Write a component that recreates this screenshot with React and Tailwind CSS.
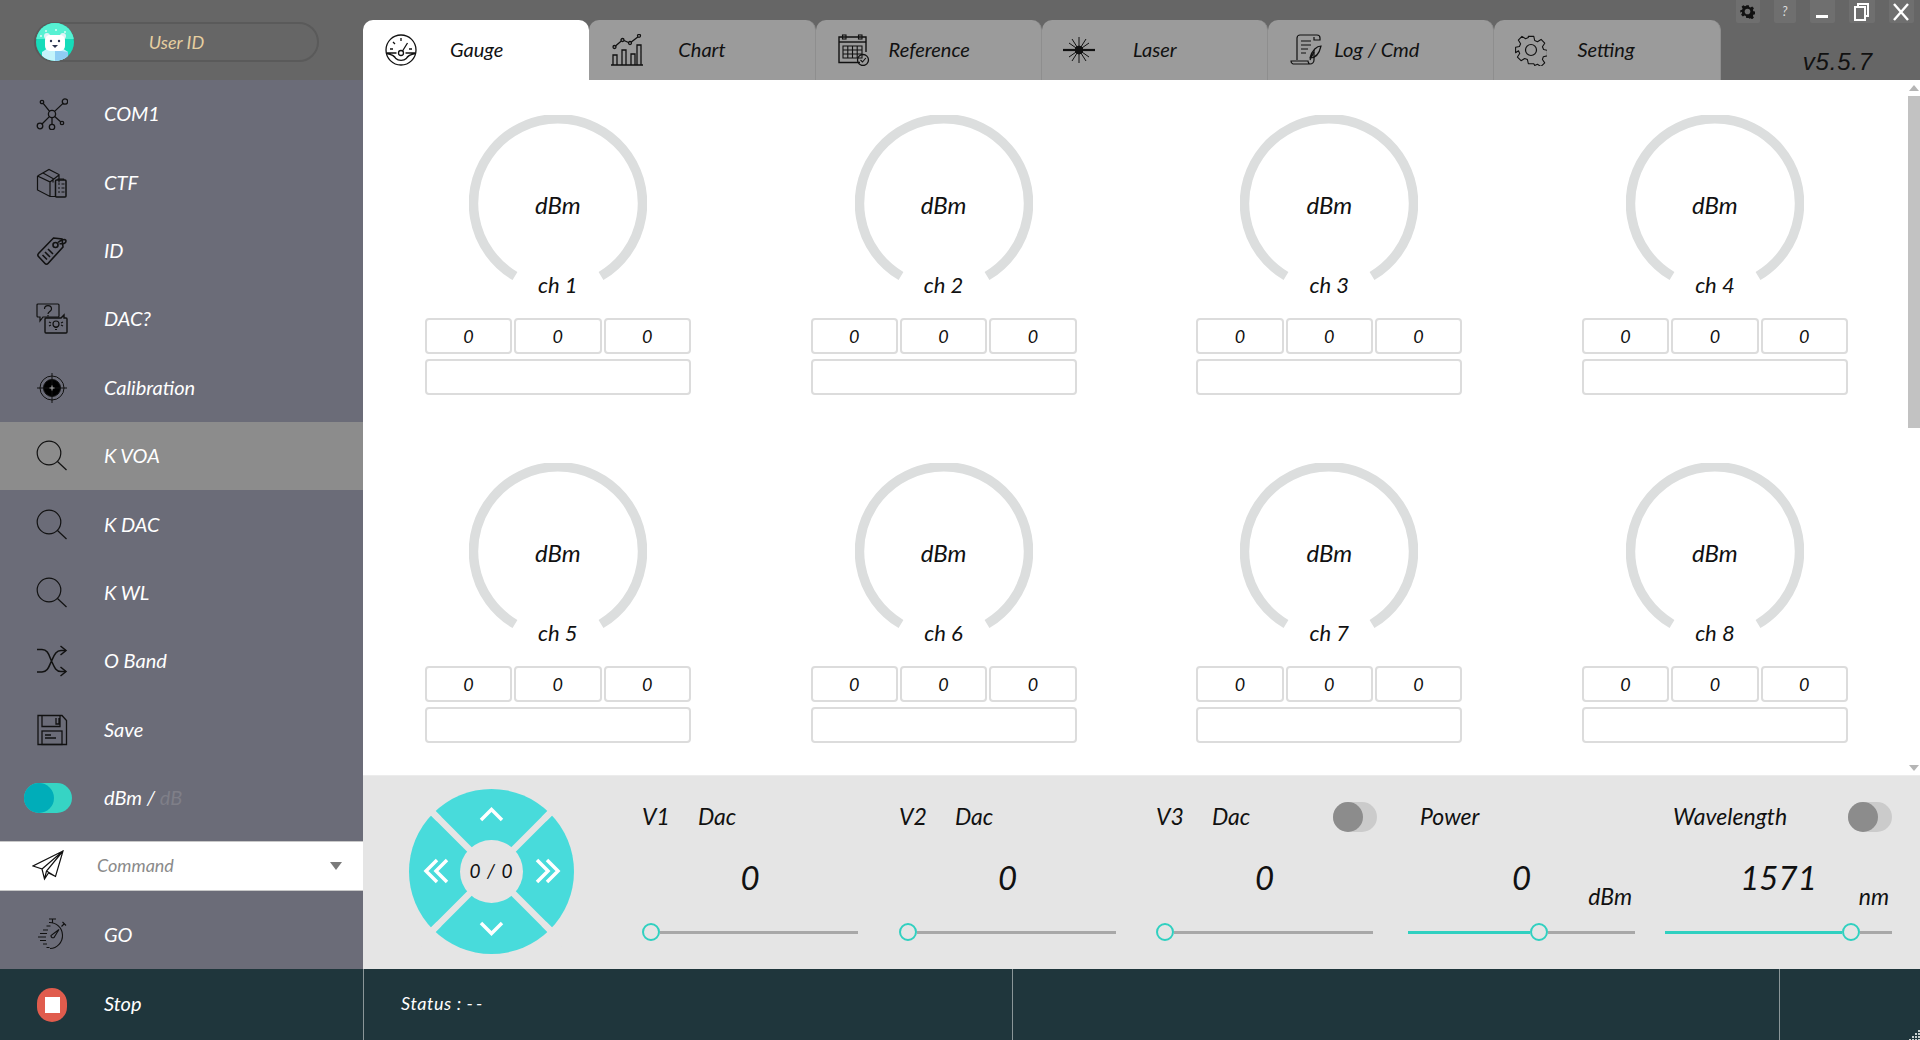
import React from "react";

const font = "font-['Lato',sans-serif] italic";

// ---------- sidebar / tab icons ----------
const Svg = ({ children, size = 32, className = "", sw = 1.2 }) => (
  <svg width={size} height={size} viewBox="0 0 32 32" fill="none" stroke="#111" strokeWidth={sw} className={className}>
    {children}
  </svg>
);

const NodesIcon = () => (
  <Svg sw={1.3}>
    <circle cx="16" cy="16" r="3.6" />
    <circle cx="29" cy="3.5" r="2.7" />
    <circle cx="6" cy="4" r="1.7" />
    <circle cx="4" cy="28" r="2.8" />
    <circle cx="16" cy="29" r="2.7" />
    <circle cx="26" cy="25" r="1.7" />
    <path d="M18.6 13.4 27 5.4M13.6 13.4 7.2 5.3M13.4 18.6 6 26M16 19.6v6.7M18.7 18.6l5.9 5.2" />
  </Svg>
);
const BoxIcon = () => (
  <Svg>
    <path d="M1.500 9 13 2.500 23 7.500v8M1.500 9v14L14 29.500h6M1.500 9 14 15v14.500M14 15 23 8M7 6l10 5.500v4" />
    <rect x="19.500" y="13" width="10.500" height="17" rx="1" strokeWidth="1.5" />
    <path d="M22 13v-1h5.500v1M22 17h2M25.500 17h3M22 21h2M25.500 21h3M22 25h2M25.500 25h3" />
  </Svg>
);
const TagIcon = () => (
  <Svg sw={1.6}>
    <path d="M17.500 3 26 4 27 12 12 28.500a2 2 0 0 1-3 0L2.500 21.500a2 2 0 0 1 0-3z" />
    <circle cx="19.500" cy="10" r="2.500" />
    <path d="M22 7.500c3-3 8-4 8-1.500s-3 3-6.500 2.700M9 17l5 5M6.500 20l4.500 4.500M12 14l5 5" />
  </Svg>
);
const ChatIcon = () => (
  <Svg>
    <path d="M2 1h20a1 1 0 0 1 1 1v11a1 1 0 0 1-1 1H7l-3 4v-4H2a1 1 0 0 1-1-1V2a1 1 0 0 1 1-1z" />
    <path d="M8.500 6c0-4.500 7-4.500 7 0 0 2.500-3.500 2.500-3.500 5M12 12v1.500" />
    <path d="M10 15h15l3-3v3h2a1 1 0 0 1 1 1v13a1 1 0 0 1-1 1H10a1 1 0 0 1-1-1V16a1 1 0 0 1 1-1z" strokeWidth="1.4" />
    <circle cx="20" cy="21" r="3" />
    <path d="M18.500 24.500h3M19 26.500h2M13 19l2 1M13 23l2-1M27 19l-2 1M27 23l-2-1" />
  </Svg>
);
const TargetIcon = () => (
  <Svg sw={1}>
    <circle cx="16" cy="16" r="12" />
    <circle cx="16" cy="16" r="8.500" fill="#000" />
    <path d="M16 1v30M1 16h30" />
    <path d="M16 13.500v5M13.500 16h5" stroke="#aaa" />
  </Svg>
);
const SearchIcon = () => (
  <Svg sw={1.2}>
    <circle cx="13" cy="13" r="11.800" />
    <path d="M21.500 21.500 30.500 30" />
  </Svg>
);
const ShuffleIcon = () => (
  <Svg sw={1.5}>
    <path d="M1 4.500h5c6 0 7 6 9.500 11.500s4 10.500 9.500 10.500h5M1 27h5c6 0 7-6 9.500-11s4-10.500 9.500-10.500h5" />
    <path d="m24.500 1 5.500 4.500-5.500 4.500M24.500 22l5.500 4.500-5.500 4.500" />
  </Svg>
);
const SaveIcon = () => (
  <Svg sw={1.3}>
    <path d="M2 1.500h24l4.500 5v24H2z" />
    <path d="M6 1.500v11h18v-11M20 4v6h3V4" />
    <rect x="6" y="17" width="20" height="13.500" />
    <path d="M9 21h6M9 24h11" />
  </Svg>
);
const PlaneIcon = () => (
  <Svg sw={1.2}>
    <path d="M31 1 1 16l9 3 2.500 10 4-6 7 3.500zM31 1 10 19M31 1 14.500 21l-2 8M14.500 21l9 5.500" />
  </Svg>
);
const TimerIcon = () => (
  <Svg sw={1.1}>
    <path d="M12 4.500A13 13 0 1 1 13 30.500M27 6l-2.500 2.500M25.500 4l3.500 3.500M12 1h7M15.500 1v3.500" />
    <path d="m22 11.500-5 8a2 2 0 0 1-3-2z" />
    <path d="M9.500 8h4M6 12h5M3 15.500h7M1 19h8M3 22.500h6M6 26h4M9.500 29.500h3" strokeWidth="1" />
  </Svg>
);

const GaugeIcon = () => (
  <Svg size={32} sw={1.3}>
    <circle cx="16" cy="16" r="15" />
    <path d="M1.500 19h10M20.500 19h10M1.800 19.500c5 1 8 3 9 5 2.500 2.500 8 2.500 10.500 0 1-2 4-4 9-5" />
    <circle cx="16" cy="19" r="2.500" />
    <path d="m17.500 17 5-8M5 15h3M24 15h3M8 8l2 2M16 4v3" />
  </Svg>
);
const ChartIcon = () => (
  <Svg size={32} sw={1.3}>
    <path d="M0 31h32M2 31V21h4v10M11 31V16h4v15M20 31V20h4v11M26 31V11h4v20" />
    <circle cx="3.500" cy="13" r="1.500" />
    <circle cx="11.500" cy="6" r="1.500" />
    <circle cx="19" cy="9" r="1.500" />
    <circle cx="28" cy="1.800" r="1.500" />
    <path d="m4.500 12 5.800-5M13 6.500l4.500 2M20.300 8l6.500-5" />
  </Svg>
);
const CalendarIcon = () => (
  <Svg size={32} sw={1.1}>
    <path d="M22 28.500H1V3h27v15" strokeWidth="1.4" />
    <path d="M1 8h27" strokeWidth="1.4" />
    <rect x="4.500" y="1" width="3.500" height="4" />
    <rect x="20.500" y="1" width="3.500" height="4" />
    <path d="M5 12h19v12H5zM5 16h19M5 20h19M9.800 12v12M14.500 12v12M19.200 12v12" />
    <circle cx="25" cy="26" r="5.500" strokeWidth="1.3" />
    <path d="m22.500 26 2 2 3.300-4" />
  </Svg>
);
const LaserIcon = () => (
  <svg width="32" height="32" viewBox="0 0 32 32" fill="none" stroke="#111" strokeWidth="1">
    <path d="M0 16h32" strokeWidth="2.200" />
    <path d="M16 3v26M9 5l14 22M23 5 9 27M6 9l20 14M26 9 6 23" />
    <circle cx="16" cy="16" r="4" fill="#111" />
  </svg>
);
const ScrollIcon = () => (
  <Svg size={32} sw={1.2}>
    <path d="M7 26V4a3 3 0 0 1 3-3h17a3 3 0 0 1 3 3v2h-6V3" />
    <path d="M24 16v10a4 4 0 0 1-4 4H3a3 3 0 0 1-2-3h17c0 1 1 3 2 3" />
    <path d="M11 7h10M11 11h10M11 15h7M11 19h5" />
    <path d="M31 12c-4 0-9 4-11 12 4 0 9-3 11-12zM20 26l4-8" />
  </Svg>
);
const cogPath =
  "M13 1h6l1 4.500 3 1.300 4-2.500 4 4.200-2.500 3.800 1.300 3 4.200 1v6l-4.500 1-1 3 2.500 3.800-4.200 4-3.800-2.500-3 1.300L19 31h-6l-1-4.500-3-1.300-4 2.500-4-4 2.500-4-1.300-3L-1 19v-6l4.200-1 1.300-3-2.500-4 4-4 4 2.500 3-1.300z";
const CogIcon = () => (
  <svg width="32" height="32" viewBox="0 0 32 32" fill="none" stroke="#111" strokeWidth="1.2" strokeLinejoin="round">
    <path d={cogPath} transform="translate(1.500 1.500) scale(.91)" />
    <circle cx="16" cy="16" r="5.500" />
  </svg>
);
const SolidCog = () => (
  <svg width="15" height="15" viewBox="0 0 32 32">
    <path d={cogPath} fill="#111" transform="translate(1.500 1.500) scale(.91)" />
    <circle cx="16" cy="16" r="6" fill="#6f6f6f" />
  </svg>
);

// polar bear avatar
const Bear = () => (
  <svg width="38" height="38" viewBox="0 0 38 38" className="shrink-0 relative">
    <defs>
      <clipPath id="av">
        <circle cx="19" cy="19" r="19" />
      </clipPath>
    </defs>
    <g clipPath="url(#av)">
      <rect width="38" height="38" fill="#16dcba" />
      <rect width="38" height="16" fill="#57f1d3" />
      <path d="M6 38v-9l6-4h14l6 4v9z" fill="#c4f4fb" />
      <path d="M19 38V27l13 2v9z" fill="#8fcdf4" />
      <circle cx="11" cy="13" r="3" fill="#dff3f6" />
      <circle cx="27" cy="13" r="3" fill="#dff3f6" />
      <rect x="9" y="12" width="20" height="16" rx="5" fill="#fff" />
      <circle cx="15" cy="18" r="1.200" fill="#2c3550" />
      <circle cx="23" cy="18" r="1.200" fill="#2c3550" />
      <path d="M16 22h6l-3 3z" fill="#2c3550" />
      <path d="M10 7v2M9 8h2M20 6v2M19 7h2M29 8v2M28 9h2M5 12v2M4 13h2" stroke="#fff" strokeWidth=".7" />
    </g>
  </svg>
);

// ---------- sidebar ----------
const menu = [
  { label: "COM1", icon: <NodesIcon /> },
  { label: "CTF", icon: <BoxIcon /> },
  { label: "ID", icon: <TagIcon /> },
  { label: "DAC?", icon: <ChatIcon /> },
  { label: "Calibration", icon: <TargetIcon /> },
  { label: "K VOA", icon: <SearchIcon />, active: true },
  { label: "K DAC", icon: <SearchIcon /> },
  { label: "K WL", icon: <SearchIcon /> },
  { label: "O Band", icon: <ShuffleIcon /> },
  { label: "Save", icon: <SaveIcon /> },
];

function MenuRow({ label, icon, active }) {
  return (
    <div className={`h-[68.4px] flex items-center shrink-0 ${active ? "bg-[#8c8c8c]" : ""}`}>
      <div className="w-[104px] pl-[36px] flex items-center">{icon}</div>
      <span className="text-white text-[20px] pb-[2px]">{label}</span>
    </div>
  );
}

function Sidebar() {
  return (
    <div className="w-[363px] shrink-0 flex flex-col bg-[#6b6c78]">
      <div className="h-[80px] bg-[#666666] flex items-center pl-[35px] pt-[4px] shrink-0">
        <div className="relative w-[285px] h-[40px] rounded-full border-[2px] border-[#5a5a5a] flex items-center justify-center -ml-[1px]">
          <span className="text-[#e6cfa0] text-[18px]">User ID</span>
          <div className="absolute left-0 top-[-1px]">
            <Bear />
          </div>
        </div>
      </div>

      {menu.map((m) => (
        <MenuRow key={m.label} {...m} />
      ))}

      <div className="h-[68.4px] flex items-center shrink-0">
        <div className="w-[104px] pl-[24px]">
          <div className="w-[48px] h-[30px] rounded-full bg-[#36d4c4]">
            <div className="w-[30px] h-[30px] rounded-full bg-[#00adb9]" />
          </div>
        </div>
        <span className="text-white text-[20px] pb-[2px]">
          dBm / <span className="text-[#7f7f88]">dB</span>
        </span>
      </div>

      <div className="mt-[9px] h-[50px] bg-white border-y border-[#c8c8c8] flex items-center shrink-0">
        <div className="w-[97px] pl-[32px]">
          <PlaneIcon />
        </div>
        <span className="text-[#8a8a8a] text-[18px] pb-[2px]">Command</span>
        <div className="ml-auto mr-[21px] w-0 h-0 border-x-[6px] border-x-transparent border-t-[8px] border-t-[#7a7a7a]" />
      </div>

      <div className="h-[78px] flex items-center shrink-0 pt-[7px]">
        <div className="w-[104px] pl-[37px]">
          <TimerIcon />
        </div>
        <span className="text-white text-[20px]">GO</span>
      </div>

      <div className="flex-1 bg-[#1f363c] flex items-center">
        <div className="w-[104px] pl-[37px]">
          <div className="w-[30px] h-[34px] rounded-full bg-[#e05c4d] flex items-center justify-center">
            <div className="w-[15px] h-[16px] bg-white" />
          </div>
        </div>
        <span className="text-white text-[20px] pb-[3px]">Stop</span>
      </div>
    </div>
  );
}

// ---------- top tabs ----------
const tabs = [
  { label: "Gauge", icon: <GaugeIcon />, active: true, gap: "w-[87px] pl-[22px]" },
  { label: "Chart", icon: <ChartIcon />, gap: "w-[89px] pl-[22px]" },
  { label: "Reference", icon: <CalendarIcon />, gap: "w-[73px] pl-[22px]" },
  { label: "Laser", icon: <LaserIcon />, gap: "w-[91px] pl-[21px]" },
  { label: "Log / Cmd", icon: <ScrollIcon />, gap: "w-[66px] pl-[22px]" },
  { label: "Setting", icon: <CogIcon />, gap: "w-[83px] pl-[21px]" },
];

function TopBar() {
  return (
    <div className="h-[80px] bg-[#666666] flex shrink-0">
      <div className="flex items-end shrink-0">
        {tabs.map((t) => (
          <div
            key={t.label}
            className={`w-[226.3px] h-[60px] rounded-t-[10px] flex items-center border-r border-[#8e8e8e] ${
              t.active ? "bg-white border-r-0" : "bg-[#9b9b9b]"
            }`}
          >
            <div className={`shrink-0 ${t.gap}`}>{t.icon}</div>
            <span className="text-[#111] text-[20px] pb-[2px]">{t.label}</span>
          </div>
        ))}
      </div>
      <div className="flex-1 flex flex-col">
        <div className="flex pl-[15px] gap-[14px] h-[25px]">
          <div className="w-[24px] bg-[#6f6f6f] rounded-b-[2px] flex items-center justify-center">
            <SolidCog />
          </div>
          <div className="w-[22px] bg-[#6f6f6f] rounded-b-[2px] text-center text-[13px] text-[#ddd] leading-[22px]">?</div>
          <div className="w-[25px] bg-[#6f6f6f] rounded-b-[2px] flex items-end justify-center pb-[5px]">
            <div className="w-[12px] h-[3px] bg-white" />
          </div>
          <div className="w-[26px] bg-[#6f6f6f] rounded-b-[2px] flex items-center justify-center">
            <svg width="15" height="18" viewBox="0 0 15 18" fill="none" stroke="#fff" strokeWidth="2">
              <path d="M4 4V1h10v12h-3" />
              <rect x="1" y="4" width="10" height="13" />
            </svg>
          </div>
          <div className="w-[25px] bg-[#6f6f6f] rounded-b-[2px] flex items-center justify-center">
            <svg width="16" height="18" viewBox="0 0 16 18" stroke="#fff" strokeWidth="2.400">
              <path d="m1 1 14 16M15 1 1 17" />
            </svg>
          </div>
        </div>
        <div className="text-[#111] text-[24px] pl-[82px] mt-[21px] tracking-[0.8px] font-['Liberation_Sans',sans-serif]">v5.5.7</div>
      </div>
    </div>
  );
}

// ---------- gauges ----------
function Gauge({ ch }) {
  return (
    <div className="flex flex-col items-center">
      <div className="relative w-[178px] h-[204px]">
        <svg width="178" height="178" viewBox="0 0 178 178" fill="none" className="mt-[1px]">
          <path d="M46 161A84.500 84.500 0 1 1 132 161" stroke="#dcdede" strokeWidth="9.500" />
        </svg>
        <span className="absolute left-0 right-0 top-[73px] text-center text-[24px] text-[#111]">dBm</span>
        <span className="absolute left-0 right-0 top-[154px] text-center text-[22px] text-[#111]">ch {ch}</span>
      </div>
      <div className="w-[266px] flex flex-col gap-[5px]">
        <div className="grid grid-cols-3 gap-[2px]">
          {[0, 1, 2].map((i) => (
            <div key={i} className="h-[36px] border-[2px] border-[#dcdcdc] rounded-[4px] flex items-center justify-center text-[18px] text-[#111]">
              0
            </div>
          ))}
        </div>
        <div className="h-[36px] border-[2px] border-[#dcdcdc] rounded-[4px]" />
      </div>
    </div>
  );
}

function GaugeArea() {
  const chs = [1, 2, 3, 4, 5, 6, 7, 8];
  return (
    <div className="flex-1 flex bg-white min-h-0">
      <div className="flex-1 min-w-0 pl-[2px] pt-[34px] grid grid-cols-[repeat(4,385.7px)] auto-rows-[348px] overflow-hidden">
        {chs.map((c) => (
          <Gauge key={c} ch={c} />
        ))}
      </div>
      <div className="w-[15px] shrink-0 flex flex-col items-center pl-[3px]">
        <div className="mt-[5px] w-0 h-0 border-x-[5px] border-x-transparent border-b-[6px] border-b-[#b5b5b5]" />
        <div className="mt-[5px] w-[12px] h-[332px] bg-[#c2c2c2]" />
        <div className="mt-auto mb-[4px] w-0 h-0 border-x-[5px] border-x-transparent border-t-[6px] border-t-[#b5b5b5]" />
      </div>
    </div>
  );
}

// ---------- bottom control panel ----------
function DPad() {
  return (
    <svg width="165" height="165" viewBox="0 0 165 165" fill="none" className="shrink-0">
      <circle cx="82.500" cy="82.500" r="82.500" fill="#48dbdb" />
      <path d="M20 20 145 145M145 20 20 145" stroke="#e5e5e5" strokeWidth="6.500" />
      <path d="M5 5 30 30M160 5l-25 25M5 160l25-25M160 160l-25-25" stroke="#e5e5e5" strokeWidth="6.500" />
      <circle cx="82.500" cy="82.500" r="31.500" fill="#e5e5e5" />
      <g stroke="#fff" strokeWidth="3.500">
        <path d="m72 31 10.500-10.500L93 31M72 134l10.500 10.500L93 134" />
        <path d="m28 72-11 11 11 11M38 72 27 83l11 11M128 72l11 11-11 11M138 72l11 11-11 11" transform="translate(0 -1)" />
      </g>
      <text x="82.500" y="89" textAnchor="middle" fontFamily="Lato, sans-serif" fontStyle="italic" fontSize="19" letterSpacing="1" fill="#111">
        0 / 0
      </text>
    </svg>
  );
}

function Toggle({ className = "" }) {
  return (
    <div className={`w-[44px] h-[30px] rounded-full bg-[#cbcbcb] ml-auto shrink-0 ${className}`}>
      <div className="w-[30px] h-[30px] rounded-full bg-[#8c8c8c]" />
    </div>
  );
}

function Slider({ pos }) {
  return (
    <div className="mt-[11px] h-[18px] flex items-center">
      <div className="h-[3px] bg-[#30d0c0]" style={{ width: pos }} />
      <div className="w-[18px] h-[18px] rounded-full border-[2px] border-[#30d0c0] bg-[#e5e5e5] shrink-0" />
      <div className="h-[3px] flex-1 bg-[#a8a8a8]" />
    </div>
  );
}

function Control({ className, head, toggle, toggleClass, value, unit, pos, labelClass = "" }) {
  return (
    <div className={`flex flex-col shrink-0 ${className}`}>
      <div className="h-[30px] flex items-center text-[23px] text-[#111]">
        <div className={`flex pb-[2px] ${labelClass}`}>{head}</div>
        {toggle && <Toggle className={toggleClass} />}
      </div>
      <div className="mt-[27px] h-[53px] grid grid-cols-[1fr_auto_1fr]">
        <div />
        <span className="text-[33px] leading-[36px] text-[#111] h-[36px]">{value}</span>
        <span className="self-end justify-self-end text-[23px] leading-[28px] text-[#111] pr-[3px] pb-[2px]">{unit}</span>
      </div>
      <Slider pos={pos} />
    </div>
  );
}

const Dac = ({ n }) => (
  <>
    <span className="w-[56px]">V{n}</span>
    <span>Dac</span>
  </>
);

function ControlPanel() {
  return (
    <div className="h-[194px] bg-[#e5e5e5] flex items-start shrink-0 border-t border-[#ececec]">
      <div className="ml-[46px] mt-[13px]">
        <DPad />
      </div>
      <div className="ml-[68px] mt-[26px] flex">
        <Control className="w-[216px]" head={<Dac n={1} />} value="0" pos={0} />
        <Control className="w-[217px] ml-[41px]" head={<Dac n={2} />} value="0" pos={0} />
        <Control className="w-[217px] ml-[40px]" head={<Dac n={3} />} toggle toggleClass="-mr-[4px]" value="0" pos={0} />
        <Control className="w-[227px] ml-[35px]" head="Power" labelClass="pl-[12px]" value="0" unit="dBm" pos={122} />
        <Control className="w-[227px] ml-[30px]" head="Wavelength" labelClass="pl-[8px]" toggle value="1571" unit="nm" pos={177} />
      </div>
    </div>
  );
}

function StatusBar() {
  return (
    <div className="h-[71px] bg-[#1f363c] flex shrink-0 text-white">
      <div className="w-[650px] border-l border-r border-[#8a9698] flex items-center pl-[37px] text-[18px] pb-[2px] tracking-[0.6px]">
        <span>
          Status : <span className="tracking-[3px]">--</span>
        </span>
      </div>
      <div className="w-[767px] border-r border-[#8a9698]" />
      <div className="flex-1 flex items-end justify-end">
        <svg width="11" height="11" viewBox="0 0 11 11" fill="#c8d0d0">
          <path d="M9 1h2v2H9zM6 4h2v2H6zM9 4h2v2H9zM3 7h2v2H3zM6 7h2v2H6zM9 7h2v2H9zM0 10h2v1H0zM3 10h2v1H3zM6 10h2v1H6zM9 10h2v1H9z" />
        </svg>
      </div>
    </div>
  );
}

export default function App() {
  return (
    <div className={`w-full h-[1040px] flex overflow-hidden ${font}`}>
      <Sidebar />
      <div className="flex-1 min-w-0 flex flex-col">
        <TopBar />
        <GaugeArea />
        <ControlPanel />
        <StatusBar />
      </div>
    </div>
  );
}
